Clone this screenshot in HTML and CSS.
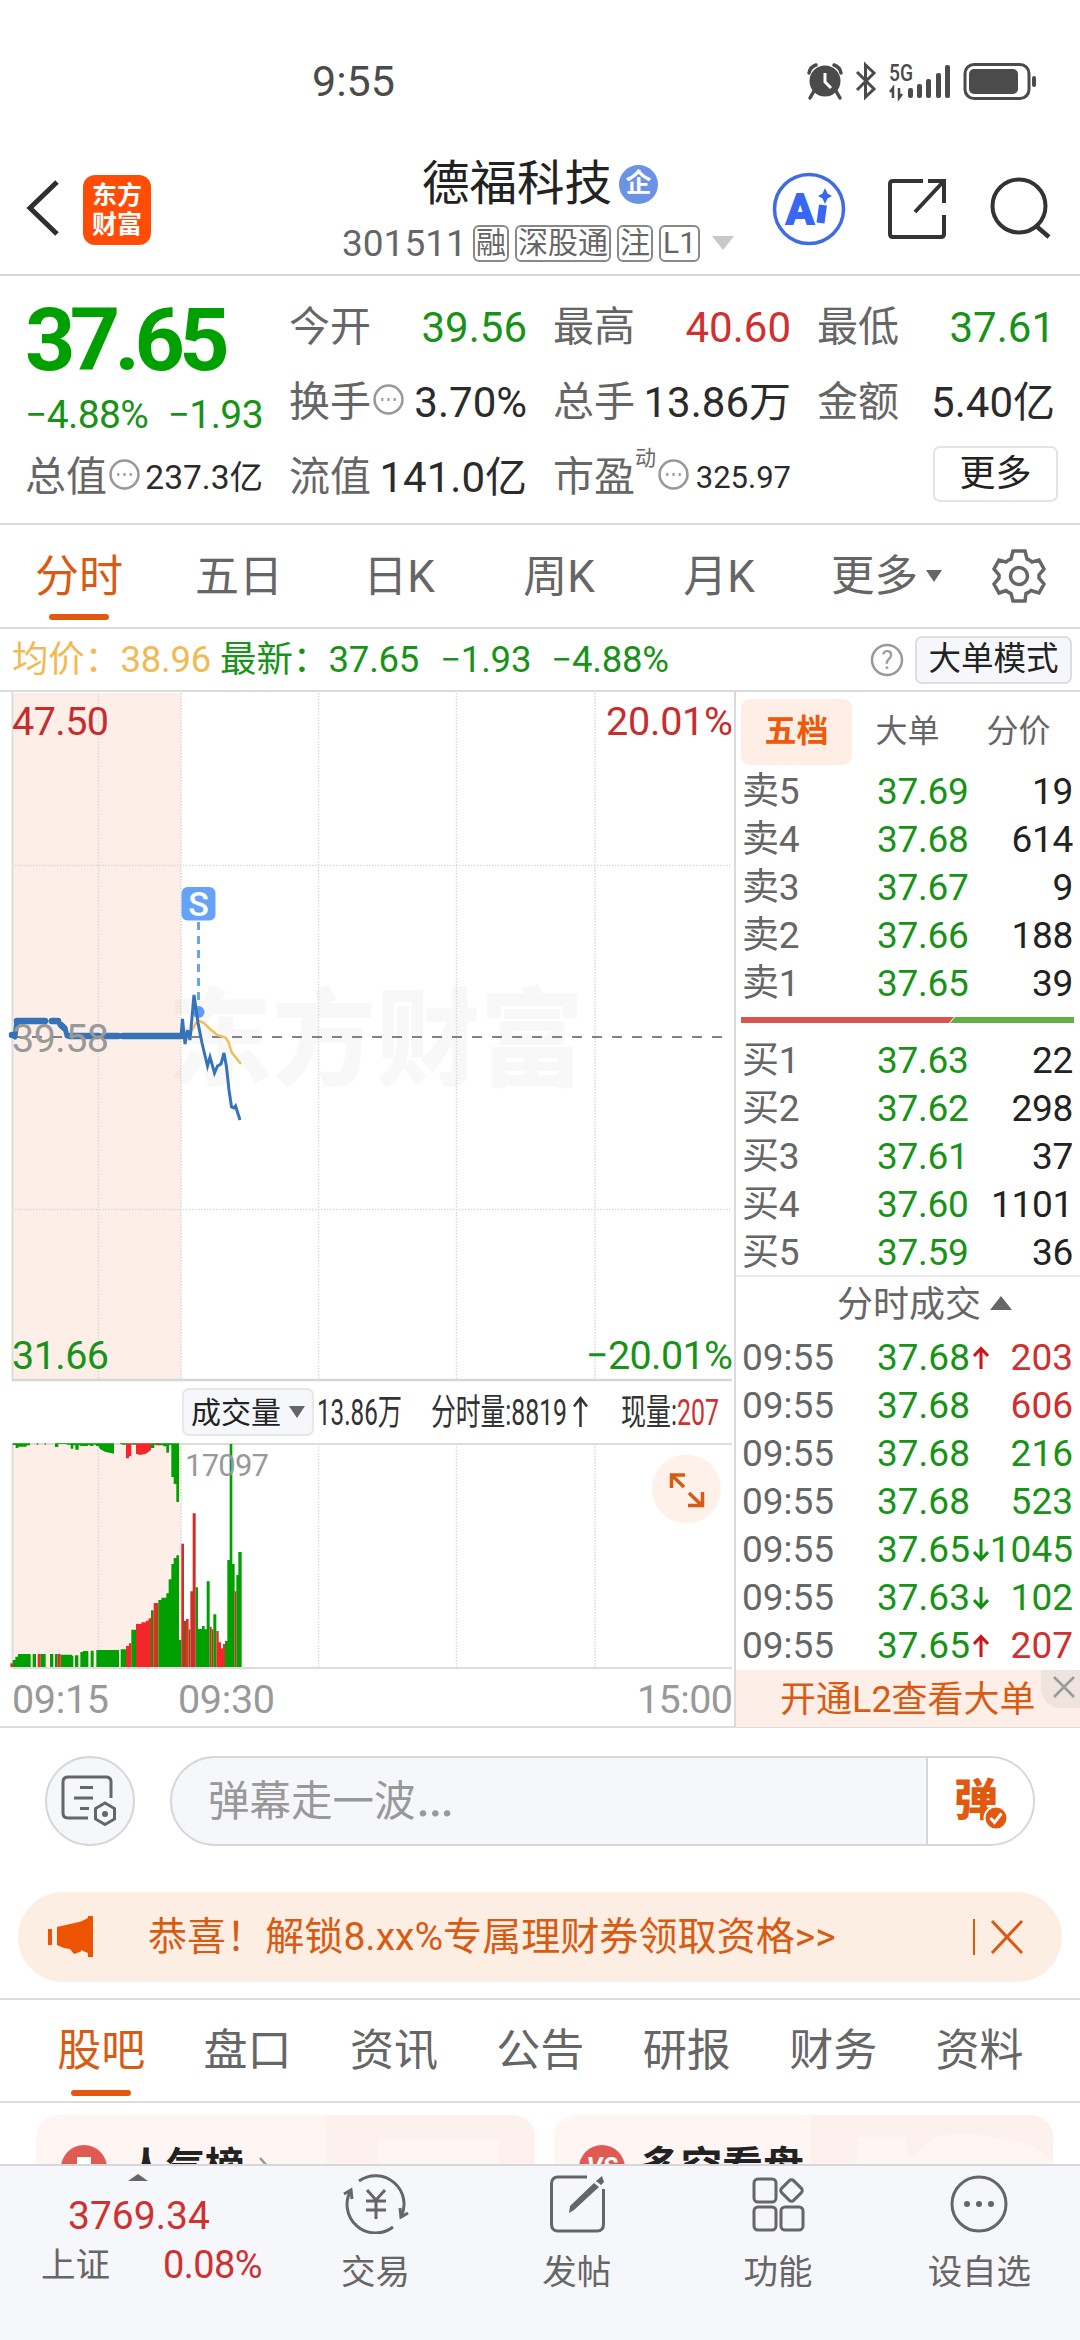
FILE: index.html
```html
<!DOCTYPE html>
<html lang="zh-CN">
<head>
<meta charset="utf-8">
<title>德福科技 301511</title>
<link rel="stylesheet" href="styles.css">
</head>
<body>
<div class="statusbar">
  <span class="clock">9:55</span>
  <svg class="status-icons" width="240" height="50" viewBox="800 56 240 50">
    <g fill="#4b4b4b" stroke="none">
      <circle cx="825" cy="81" r="15.5"/>
      <path d="M814 91l-4 7M836 91l4 7M809 73q1-6 7-8M841 73q-1-6-7-8" fill="none" stroke="#4b4b4b" stroke-width="3.500" stroke-linecap="round"/>
      <path d="M825 73v9l6 6" fill="none" stroke="#fff" stroke-width="3"/>
      <path d="M857 72l17 17-8.500 8V65l8.500 8-17 17" fill="none" stroke="#4b4b4b" stroke-width="3"/>
      <path d="M893 98v-10l-3 4M899 88v10l3-4" fill="none" stroke="#4b4b4b" stroke-width="2.500"/>
      <rect x="908" y="88" width="5" height="10" rx="2"/><rect x="917" y="84" width="5" height="14" rx="2"/><rect x="926" y="79" width="5" height="19" rx="2"/><rect x="936" y="73" width="5" height="25" rx="2"/><rect x="945" y="65" width="5" height="33" rx="2"/>
      <rect x="965" y="64.500" width="64" height="34" rx="9" fill="none" stroke="#4b4b4b" stroke-width="3"/>
      <rect x="969" y="69" width="49" height="25" rx="5"/><rect x="1032" y="76" width="4" height="11" rx="2"/>
    </g>
    <text x="889" y="81" class="net" textLength="24" lengthAdjust="spacingAndGlyphs">5G</text>
  </svg>
</div>

<header class="header">
  <svg class="back" width="34" height="60" viewBox="0 0 34 60"><path d="M31 4L4 30l27 26" fill="none" stroke="#2f2f2f" stroke-width="5"/></svg>
  <div class="logo"><span>东方</span><span>财富</span></div>
  <div class="title-block">
    <div class="title">德福科技<span class="ent">企</span></div>
    <div class="sub"><span class="code">301511</span><span class="tag">融</span><span class="tag">深股通</span><span class="tag">注</span><span class="tag l1">L1</span><i class="tri-down light"></i></div>
  </div>
  <div class="head-icons">
    <svg width="74" height="76" viewBox="0 0 74 76"><circle cx="37" cy="38" r="34.500" fill="#fff" stroke="#3f6ce0" stroke-width="3.500"/><text x="14" y="53" class="ai" textLength="28" lengthAdjust="spacingAndGlyphs">A</text><path d="M51 34l-2.500 18" stroke="#3867f6" stroke-width="8"/><path d="M53 17l2.500 5.500 4.500 2.500-4.500 2.500-2.500 5.500-2.500-5.500-4.500-2.500 4.500-2.500z" fill="#3867f6"/></svg>
    <svg width="62" height="64" viewBox="0 0 62 64"><path d="M36 4H6Q3 4 3 7V57Q3 60 6 60H54Q57 60 57 57V38M41 4H57V26M56 5L28 35" fill="none" stroke="#333" stroke-width="4"/></svg>
    <svg width="64" height="64" viewBox="0 0 64 64"><circle cx="29" cy="29" r="26.500" fill="none" stroke="#333" stroke-width="4"/><path d="M45 48L59 60" stroke="#333" stroke-width="4.500"/></svg>
  </div>
</header>

<section class="quote">
  <div class="price-col">
    <div class="last">37.65</div>
    <div class="chg"><span>−4.88%</span><span>−1.93</span></div>
    <div class="kv small"><b>总值</b><svg class="dots" viewBox="0 0 30 30"><circle cx="15" cy="15" r="13.500"/><path d="M8 15h2M14 15h2M20 15h2"/></svg><em>237.3亿</em></div>
  </div>
  <div class="grid">
    <div class="kv"><b>今开</b><em class="g">39.56</em></div>
    <div class="kv"><b>最高</b><em class="r">40.60</em></div>
    <div class="kv"><b>最低</b><em class="g">37.61</em></div>
    <div class="kv"><b>换手</b><svg class="dots" viewBox="0 0 30 30"><circle cx="15" cy="15" r="13.500"/><path d="M8 15h2M14 15h2M20 15h2"/></svg><em>3.70%</em></div>
    <div class="kv"><b>总手</b><em>13.86万</em></div>
    <div class="kv"><b>金额</b><em>5.40亿</em></div>
    <div class="kv"><b>流值</b><em>141.0亿</em></div>
    <div class="kv small pe"><b>市盈</b><sup>动</sup><svg class="dots" viewBox="0 0 30 30"><circle cx="15" cy="15" r="13.500"/><path d="M8 15h2M14 15h2M20 15h2"/></svg><em>325.97</em></div>
    <div class="more-cell"><span class="more-btn">更多</span></div>
  </div>
</section>

<nav class="ktabs">
  <span class="on">分时</span><span>五日</span><span>日K</span><span>周K</span><span>月K</span>
  <span class="more">更多<i class="tri-down"></i></span>
  <svg class="gear" width="54" height="54" viewBox="-27 -27 54 54"><path d="M-6-25H6L8-17Q11-16 13-14L20-16L25-7L20-1V2L25 8L20 17L12 14.500Q10 16.500 7 17.500L6 25H-6L-8 17.500Q-11 16.500-13 14.500L-20 17L-25 8L-20 2V-1L-25-7L-20-16L-13-14Q-11-16-8-17Z" fill="none" stroke="#666" stroke-width="3.500"/><circle r="8.500" fill="none" stroke="#666" stroke-width="3.500"/></svg>
</nav>

<div class="info">
  <span class="avg">均价：</span><span class="avg n1">38.96</span><span class="g n2">最新：</span><span class="g n1">37.65</span><span class="g n3">−1.93</span><span class="g n4">−4.88%</span>
  <svg class="help" width="34" height="34" viewBox="0 0 34 34"><circle cx="17" cy="17" r="15" fill="none" stroke="#999" stroke-width="2.500"/><text x="17" y="25.500" text-anchor="middle" class="qm">?</text></svg>
  <span class="mode">大单模式</span>
</div>

<main class="board">
  <div class="charts">
    <svg class="price-chart" width="734" height="690" viewBox="0 692 734 690">
      <rect x="12" y="693" width="169" height="687" fill="#fdeee7"/>
      <text x="168" y="1077" class="wm" textLength="416" lengthAdjust="spacingAndGlyphs">东方财富</text>
      <path d="M12 865.500H732M12 1209.500H732M98.500 693V1380M181 693V1380M318.500 693V1380M456.500 693V1380M595 693V1380" stroke="#d9d9d9" stroke-width="1.500" stroke-dasharray="1.500 1.500" fill="none"/>
      <path d="M12.500 692V1380" stroke="#ddd" stroke-width="2"/>
      <path d="M12 1380H732" stroke="#d6d6d6" stroke-width="2.500"/>
      <path d="M12 1037H732" stroke="#828282" stroke-width="2" stroke-dasharray="10 10"/>
      <path d="M191 1032L196 1023L199 1021L204 1023L210 1029L217 1035L225.500 1037.500L228.500 1042L231.500 1052L237 1059L241 1064" fill="none" stroke="#f2be58" stroke-width="2.500"/>
      <path d="M12 1035L15 1037L17 1021H45M51 1021H57L61 1025L65 1028L67 1036H181" fill="none" stroke="#3573b9" stroke-width="5" stroke-linecap="round" stroke-linejoin="round"/>
      <path d="M17 1021H45M52 1021H58M61 1025L64 1028M12 1035h.1M70 1036H98M105 1036H118M123 1036H181" fill="none" stroke="#3573b9" stroke-width="6.500" stroke-linecap="round"/>
      <circle cx="198.500" cy="1012" r="6" fill="#5c9cf3"/>
      <path d="M181 1036L182.500 1019L185 1044L187.500 1030L190 1040L194 995L198 1023L202 1043L207.500 1066L210 1057L214.500 1073L217.500 1066L221 1064L224 1053L226.500 1067L229 1090L231.500 1107L234 1108L235.500 1106L240 1120" fill="none" stroke="#3573b9" stroke-width="3"/>
      <path d="M198.500 922V1008" stroke="#68a4f3" stroke-width="3" stroke-dasharray="8 6"/>
      <rect x="181.500" y="887" width="34" height="33.500" rx="6" fill="#66a3f8"/>
      <text x="198.500" y="916" text-anchor="middle" class="s">S</text>
      <g class="num">
        <text x="12" y="735" fill="#c62d2d" textLength="97">47.50</text>
        <text x="733" y="735" fill="#c62d2d" text-anchor="end" textLength="127">20.01%</text>
        <text x="12" y="1052" fill="#999" textLength="97">39.58</text>
        <text x="12" y="1369" fill="#189318" textLength="97">31.66</text>
        <text x="733" y="1369" fill="#189318" text-anchor="end" textLength="147">−20.01%</text>
      </g>
    </svg>
    <div class="vol-head">
      <span class="vol-btn">成交量<i class="tri-down"></i></span>
      <svg width="420" height="60" viewBox="314 1382 420 60">
        <g class="cond">
          <text x="317" y="1425" textLength="85" lengthAdjust="spacingAndGlyphs">13.86万</text>
          <text x="431" y="1425" textLength="136" lengthAdjust="spacingAndGlyphs">分时量:8819</text>
          <text x="621" y="1425" textLength="98" lengthAdjust="spacingAndGlyphs">现量:<tspan fill="#d03030">207</tspan></text>
          <path d="M580.500 1427V1398M574 1406.500L580.500 1398L587 1406.500" fill="none" stroke="#333" stroke-width="2.500"/>
        </g>
      </svg>
    </div>
    <svg class="vol-chart" width="734" height="285" viewBox="0 1443 734 285">
      <rect x="12" y="1444" width="169" height="224" fill="#fdeee7"/>
      <path d="M98.500 1444V1668M181 1444V1668M318.500 1444V1668M456.500 1444V1668M595 1444V1668" stroke="#d9d9d9" stroke-width="1.500" stroke-dasharray="1.500 1.500"/>
      <path d="M12 1444H732M12 1668H732" stroke="#ddd" stroke-width="2"/>
      <path d="M12.500 1444V1668" stroke="#ddd" stroke-width="2"/>
      <g transform="translate(0 1430) scale(.33333)">
        <path fill="#00a000" d="M38 711V690H46V680H54V672H92V711ZM98 672h10V711H98ZM121 672h16V711H121ZM150 672h10V711H150ZM165 672h8V711H165ZM182 674h34v3h4V711H182ZM225 676h10V711H225ZM241 711V666h8v-3h16V711ZM272 662h9V711H272ZM289 660H357V711H289ZM362 658H378V711H362ZM394 599h14V711H394ZM453 541h8V711H453ZM475 711V510H484V503H499V490H506V448H514V402H521V384H529V376H537V630H544V711ZM587 711V472H594V597H606V588H614V598H620V454H629V711ZM640 553h9V711H640ZM675 711V633H682V390H689V42H697V402H704V711ZM709 711V435H715V366H725V711Z"/>
        <path fill="#f3262a" d="M31 700h8V711H31ZM113 672h8V711H113ZM173 672h9V711H173ZM378 711V648H387V640H394V711ZM408 711V582H424V577H438V572H446V565H453V711ZM461 519H475V711H461ZM558 567h8V711H558ZM649 711V603H656V637H663V655H669V642H675V711Z"/>
        <path fill="#cf2f2b" d="M544 711V341H552V711ZM571 711V484H578V250H587V711ZM629 590h6V711H629ZM704 484H709V711H704Z"/>
        <path fill="#7a5a12" d="M552 572h6V711H552ZM566 598h5V711H566ZM635 598h5V711H635ZM455 545h4V711H455ZM470 525h4V711H470Z"/>
        <path fill="#00a000" d="M38 40H90V46H80V50H55V54H47V45H38ZM110 40h5v4h-5ZM134 40h4v4h-4ZM152 40H165V51H175V42H200V44H212V56H220V46H226V59H236V46H241V48H264V45H270V48H280V44H288V48H295L301 58L315 65L342 71V40ZM360 40H378V44H365V42H360ZM453 40H537V216H529V162H521V141H514V45H507V68H499V49H490V46H475V44H463V54H453ZM394 40H408V44H394Z"/>
        <path fill="#f3262a" d="M378 40V85H387V79H394V40ZM408 40V71L420 75L438 71L446 65L453 60V40ZM467 40h10v6h-10Z"/>
      </g>
      <text x="185" y="1476" class="vmax" textLength="84">17097</text>
      <circle cx="686.500" cy="1489" r="34.500" fill="#fef1ea"/>
      <path d="M671.500 1488V1475H685M672 1475.500L684 1487M689 1493L702 1505.500M702.500 1492V1505.500H688" fill="none" stroke="#d85b13" stroke-width="3.500"/>
      <g class="num" fill="#999">
        <text x="12" y="1713" textLength="97">09:15</text>
        <text x="178" y="1713" textLength="97">09:30</text>
        <text x="733" y="1713" text-anchor="end" textLength="96">15:00</text>
      </g>
    </svg>
  </div>

  <aside class="depth">
    <div class="dtabs"><span class="on">五档</span><span>大单</span><span>分价</span></div>
    <div class="rows">
      <div class="row"><b>卖5</b><i>37.69</i><em>19</em></div>
      <div class="row"><b>卖4</b><i>37.68</i><em>614</em></div>
      <div class="row"><b>卖3</b><i>37.67</i><em>9</em></div>
      <div class="row"><b>卖2</b><i>37.66</i><em>188</em></div>
      <div class="row"><b>卖1</b><i>37.65</i><em>39</em></div>
    </div>
    <svg class="ratio" width="333" height="6" viewBox="0 0 333 6"><path d="M0 0H213L208 6H0Z" fill="#d9534f"/><path d="M214 0H333V6H209Z" fill="#60b044"/></svg>
    <div class="rows buy">
      <div class="row"><b>买1</b><i>37.63</i><em>22</em></div>
      <div class="row"><b>买2</b><i>37.62</i><em>298</em></div>
      <div class="row"><b>买3</b><i>37.61</i><em>37</em></div>
      <div class="row"><b>买4</b><i>37.60</i><em>1101</em></div>
      <div class="row"><b>买5</b><i>37.59</i><em>36</em></div>
    </div>
    <div class="deals-head">分时成交<i class="tri-up"></i></div>
    <div class="rows deals">
      <div class="row"><b>09:55</b><i>37.68<svg class="arr r" viewBox="0 0 16 24"><path d="M8 23V3M1 10L8 2.500L15 10"/></svg></i><em class="r">203</em></div>
      <div class="row"><b>09:55</b><i>37.68</i><em class="r">606</em></div>
      <div class="row"><b>09:55</b><i>37.68</i><em class="g">216</em></div>
      <div class="row"><b>09:55</b><i>37.68</i><em class="g">523</em></div>
      <div class="row"><b>09:55</b><i>37.65<svg class="arr g" viewBox="0 0 16 24"><path d="M8 1V21M1 14L8 21.500L15 14"/></svg></i><em class="g">1045</em></div>
      <div class="row"><b>09:55</b><i>37.63<svg class="arr g" viewBox="0 0 16 24"><path d="M8 1V21M1 14L8 21.500L15 14"/></svg></i><em class="g">102</em></div>
      <div class="row"><b>09:55</b><i>37.65<svg class="arr r" viewBox="0 0 16 24"><path d="M8 23V3M1 10L8 2.500L15 10"/></svg></i><em class="r">207</em></div>
    </div>
    <div class="l2">开通L2查看大单<span class="x"><svg width="24" height="24" viewBox="0 0 24 24"><path d="M2 2L22 22M22 2L2 22" stroke="#999" stroke-width="2.500"/></svg></span></div>
  </aside>
</main>

<div class="danmu">
  <span class="round"><svg width="60" height="56" viewBox="0 0 60 56"><g fill="none" stroke="#666" stroke-width="3"><path d="M51 25V9Q51 4 46 4H8Q3 4 3 9V40Q3 45 8 45H28M20 14.500H33M14 25H33M20 35.500H29"/><path d="M45 30L54.500 35.500V46L45 51.500L35.500 46V35.500Z"/></g><circle cx="45" cy="41" r="3" fill="#666"/></svg></span>
  <div class="dm-input"><span>弹幕走一波<span class="ell">…</span></span><span class="dm-toggle">弹<svg width="26" height="26" viewBox="0 0 26 26"><circle cx="13" cy="13" r="11.500" fill="#e2580f" stroke="#fff" stroke-width="2"/><path d="M7.500 13l4 4.500 7-9" fill="none" stroke="#fff" stroke-width="3"/></svg></span></div>
</div>

<div class="notice">
  <svg class="horn" width="48" height="42" viewBox="0 0 48 42"><path d="M10 11L34 5.500L41 2V0H46V41H41V37L34 34V35.500L27 38L23 33L17 32L10 29Z" fill="#ec5302"/><rect x="1" y="13" width="4" height="16" fill="#ec5302"/></svg>
  <span class="msg">恭喜！解锁8.xx%专属理财券领取资格&gt;&gt;</span>
  <i class="bar"></i>
  <svg class="close" width="34" height="34" viewBox="0 0 34 34"><path d="M2 1L32 33M32 1L2 33" stroke="#d85b13" stroke-width="3"/></svg>
</div>

<nav class="ctabs"><span class="on">股吧</span><span>盘口</span><span>资讯</span><span>公告</span><span>研报</span><span>财务</span><span>资料</span></nav>

<div class="cards">
  <div class="card"><svg class="deco" width="209" height="49" viewBox="0 0 209 49"><path d="M0 0H209V49H173V24H52V49H-44V31H0Z" fill="#fdf1ee"/></svg>
    <svg class="ic" width="46" height="46" viewBox="0 0 46 46"><circle cx="23" cy="23" r="23" fill="#e05a54"/><path d="M16 12h14v24H16z" fill="#fff"/></svg><span>人气榜</span><svg class="chev" width="12" height="22" viewBox="0 0 12 22"><path d="M1 1l9 10-9 10" fill="none" stroke="#999" stroke-width="2.500"/></svg></div>
  <div class="card"><svg class="deco" width="242" height="49" viewBox="0 0 242 49"><path d="M0 0H242V49H0Z" fill="#fdf1ee"/><path d="M46 22H94L99 43L121 24Q150 14 188 24Q230 28 242 49H46Z" fill="#fff6f3"/></svg>
    <svg class="ic" width="46" height="46" viewBox="0 0 46 46"><circle cx="23" cy="23" r="23" fill="#e05a54"/><text x="23" y="30" text-anchor="middle" class="vs">VS</text></svg><span>多空看盘</span></div>
</div>

<footer class="tabbar">
  <div class="index"><i class="tri-up"></i><div class="pt">3769.34</div><div class="ln"><span>上证</span><em>0.08%</em></div></div>
  <div class="item"><svg width="66" height="60" viewBox="-33 -30 66 60"><g fill="none" stroke="#666" stroke-width="3"><path d="M-17-23A28.500 28.500 0 0 1 25 13M17 23A28.500 28.500 0 0 1-25-14"/><path d="M-32-10L-25-14L-24-5M24 4L25 13L32 9"/><path d="M-9-14L0-4L9-14M0-4V15M-10-3H10M-10 6H10"/></g></svg>交易</div>
  <div class="item"><svg width="66" height="60" viewBox="-33 -30 66 60"><path d="M10-27H-19Q-25.500-27-25.500-20V20Q-25.500 27-19 27H20Q26.500 27 26.500 20V-15" fill="none" stroke="#666" stroke-width="3"/><path d="M-8 9L-7 2L17-21L22-17L-3 6ZM19-23L25-28L27-22L24-19Z" fill="#666"/></svg>发帖</div>
  <div class="item"><svg width="66" height="60" viewBox="-33 -30 66 60"><g fill="none" stroke="#666" stroke-width="3"><rect x="-24" y="-25" width="22" height="23" rx="4"/><rect x="-24" y="3" width="22" height="23" rx="4"/><rect x="3" y="3" width="22" height="23" rx="4"/><rect x="5" y="-22" width="17" height="17" rx="3" transform="rotate(45 13.500 -13.500)"/></g></svg>功能</div>
  <div class="item"><svg width="66" height="60" viewBox="-33 -30 66 60"><circle r="27" fill="none" stroke="#666" stroke-width="3"/><g fill="#666"><circle cx="-12" r="3"/><circle r="3"/><circle cx="12" r="3"/></g></svg>设自选</div>
</footer>
</body>
</html>
```
FILE: styles.css
```css
* { box-sizing: border-box; }
body {
  margin: 0; width: 1080px; height: 2340px; overflow: hidden;
  display: flex; flex-direction: column; background: #fff; color: #222;
  font-family: Roboto, "Noto Sans CJK SC", sans-serif; font-size: 37px;
}
body > * { flex: none; }
b, i, em { font-weight: 400; font-style: normal; }
svg { display: block; flex: none; }
span, b, em { white-space: nowrap; }
.g { color: #189318; }
.r { color: #d03030; }
.tri-down, .tri-up { display: inline-block; width: 0; height: 0; border: 8px solid transparent; }
.tri-down { border-top: 12px solid #666; border-bottom: 0; }
.tri-up { border-bottom: 12px solid #666; border-top: 0; }
.tri-down.light { border-width: 14px 11px 0; border-top-color: #c8c8c8; }

/* status bar */
.statusbar { height: 120px; padding: 56px 40px 0 312px; display: flex; justify-content: space-between; }
.clock { font-size: 43px; line-height: 51px; color: #4b4b4b; }
.net { font: 500 23px Roboto, sans-serif; fill: #4b4b4b; }

/* header */
.header { height: 156px; border-bottom: 2px solid #d8d8d8; display: flex; padding: 0 26px; }
.back { margin-top: 58px; }
.logo { width: 68px; height: 70px; margin: 55px 0 0 23px; border-radius: 12px; background: #ff4d08; color: #fff;
  display: flex; flex-direction: column; align-items: center; justify-content: center; font-size: 25px; line-height: 29px; font-weight: 700; }
.title-block { width: 400px; margin-left: 191px; padding-top: 32px; }
.title { display: flex; align-items: center; gap: 7px; padding-left: 80px; font-size: 47.5px; line-height: 64px; height: 64px; }
.ent { width: 39px; height: 39px; border-radius: 50%; background: #6a93e6; color: #fff; font-size: 26px; line-height: 37px; text-align: center; font-weight: 700; }
.sub { display: flex; align-items: center; height: 54px; gap: 6px; color: #666; }
.code { font-size: 37px; width: 125px; }
.tag { height: 37px; border: 2px solid #888; border-radius: 6px; font-size: 30px; line-height: 32px; padding: 0 1px; }
.l1 { padding: 0 2px; }
.sub .tri-down { margin-left: 6px; }
.head-icons { display: flex; gap: 41px; align-items: center; height: 149px; margin-left: auto; padding-top: 28px; }
.ai { font: 700 42px Roboto, sans-serif; fill: #3867f6; stroke: #3867f6; stroke-width: 2; }

/* quote summary */
.quote { height: 249px; padding: 14px 25px 0; display: flex; gap: 26px; border-bottom: 2px solid #dcdcdc; }
.price-col { width: 238px; display: flex; flex-direction: column; }
.last { font-size: 88px; font-weight: 700; line-height: 99px; letter-spacing: -5.7px; height: 101px; color: #00a000; }
.chg { display: flex; justify-content: space-between; color: #189318; font-size: 39px; line-height: 48px; height: 49px; letter-spacing: -.6px; }
.grid { display: grid; grid-template-columns: repeat(3, 238px); grid-auto-rows: 75px; column-gap: 26px; }
.kv { display: flex; align-items: center; height: 75px; line-height: 75px; font-size: 42px; }
.kv b { color: #666; font-size: 41px; }
.kv em { margin-left: auto; color: #2b2b2b; }
.kv em.g { color: #189318; }
.kv em.r { color: #d03030; }
.kv.small em { font-size: 33.5px; }
.kv.pe em { font-size: 31px; }
.kv sup { font-size: 21px; line-height: 24px; color: #666; height: 64px; }
.dots { width: 31px; height: 31px; margin-left: 2px; margin-bottom: 6px; fill: none; stroke: #999; stroke-width: 2.5; }
.dots path { stroke-width: 3; }
.more-cell { display: flex; justify-content: flex-end; padding-top: 6px; }
.more-btn { width: 125px; height: 56px; border: 2px solid #e4e4e6; border-radius: 7px; font-size: 36px; line-height: 52px; text-align: center; margin-right: -3px; }

/* chart period tabs */
.ktabs { height: 104px; display: flex; border-bottom: 2px solid #dcdcdc; color: #666; font-size: 44px; line-height: 105px; }
.ktabs > span { width: 160px; text-align: center; position: relative; left: -1px; }
.ktabs .on, .ctabs .on { color: #d85b13; }
.ktabs .on::after, .ctabs .on::after { content: ""; position: absolute; left: 50px; bottom: 7px; width: 60px; height: 6px; border-radius: 3px; background: #e2580f; }
.ktabs .more { width: 152px; padding-left: 32px; text-align: left; display: flex; align-items: center; gap: 8px; font-size: 43.5px; }
.gear { margin: 24px 0 0 40px; }

.info { height: 63px; padding: 0 8px 0 12px; border-bottom: 2px solid #dcdcdc; display: flex; align-items: center; font-size: 36.5px; line-height: 64px; letter-spacing: -.2px; }
.avg { color: #f0bb55; }
.n1 { margin-left: -.5px; }
.n2 { margin-left: 9px; }
.n3 { margin-left: 21px; }
.n4 { margin-left: 20px; }
.help { margin-left: auto; margin-right: 11px; }
.qm { font: 25px Roboto, sans-serif; fill: #999; }
.mode { width: 157px; height: 48px; border: 2px solid #dcdee2; border-radius: 7px; background: #f6f7fa; font-size: 32.5px; line-height: 43px; text-align: center; letter-spacing: 0; }

/* charts */
.board { height: 1036px; display: flex; border-bottom: 2px solid #dcdcdc; }
.charts { width: 734px; }
.wm { font: 900 106px "Noto Sans CJK SC", sans-serif; fill: #000; fill-opacity: .027; }
.num { font-size: 39.5px; }
.s { font-size: 34px; font-weight: 500; fill: #fff; }
.vol-head { height: 61px; display: flex; padding-left: 182px; }
.vol-btn { width: 132px; height: 48px; margin-top: 6px; border: 2px solid #e6e8ec; border-radius: 7px; background: #f6f7fa; font-size: 30px; line-height: 43px; padding-left: 7px; display: flex; align-items: center; gap: 8px; }
.cond { font-size: 36px; fill: #333; }
.vmax { font-size: 31px; fill: #999; }

/* order book */
.depth { width: 346px; border-left: 2px solid #d8dadd; }
.dtabs { display: grid; grid-template-columns: 111px 111px 111px; height: 76px; padding: 7px 0 0 5px; color: #666; font-size: 32px; line-height: 65px; text-align: center; }
.dtabs .on { height: 66px; border-radius: 9px; background: #feeee6; color: #ee5a0c; font-weight: 700; }
.row { display: grid; grid-template-columns: 135px 110px 1fr; height: 48px; line-height: 48px; padding: 0 7px 0 6px; font-size: 37px; }
.row b { color: #666; }
.row i { color: #189318; display: flex; align-items: center; }
.rows:not(.deals) { letter-spacing: -.3px; }
.row em { text-align: right; justify-self: end; }
.arr { width: 16px; height: 24px; margin-left: 3px; fill: none; stroke: #109010; stroke-width: 3; }
.arr.r { stroke: #cf1515; }
.ratio { margin: 9px 0 0 5px; }
.buy { margin-top: 14px; height: 240px; border-bottom: 2px solid #e9e9ec; }
.deals-head { height: 57px; line-height: 57px; padding-left: 101px; font-size: 36px; color: #666; display: flex; align-items: center; gap: 9px; }
.deals-head .tri-up { border-width: 0 11px 14px; margin-bottom: 5px; }
.l2 { height: 57px; background: #fdeee7; color: #d85b13; font-size: 36px; line-height: 60px; padding-left: 44px; position: relative; }
.x { position: absolute; right: 0; top: 0; width: 39px; height: 38px; border-bottom-left-radius: 20px; background: #eee3df; padding: 5px 0 0 11px; }

/* comment bar and notice */
.danmu { height: 164px; padding: 28px 45px 0; display: flex; gap: 35px; }
.round { width: 90px; height: 90px; border: 2px solid #d5d7da; border-radius: 50%; background: #f6f7fa; display: flex; align-items: center; justify-content: center; }
.dm-input { width: 865px; height: 90px; border: 2px solid #d5d7da; border-radius: 45px; background: #f6f7fa; display: flex; justify-content: space-between; overflow: hidden; font-size: 41.5px; line-height: 88px; padding-left: 36px; color: #999; }
.ell { font-size: 58px; line-height: 0; }
.dm-toggle { width: 107px; background: #fff; border-left: 2px solid #d5d7da; color: #e2580f; font-weight: 900; font-size: 44px; padding-left: 26px; position: relative; line-height: 86px; }
.dm-toggle svg { position: absolute; left: 55px; top: 47px; }

.notice { width: 1044px; height: 90px; margin: 0 18px; border-radius: 45px; background: #fdeee4; display: flex; align-items: center; padding: 0 38px 0 29px; color: #d85b13; }
.msg { font-size: 39.1px; margin-left: 53px; line-height: 86px; }
.bar { width: 2px; height: 36px; background: #d85b13; margin-left: auto; margin-right: 15px; }

.ctabs { height: 105px; margin-top: 16px; padding-left: 28px; border-top: 2px solid #dcdcdc; border-bottom: 2px solid #dcdcdc; display: grid; grid-template-columns: repeat(7, 146.4px); text-align: center; font-size: 44px; line-height: 103px; color: #666; }
.ctabs span { position: relative; }
.ctabs .on::after { left: 43px; bottom: 7px; }

.cards { height: 61px; padding: 12px 28px 0 36px; display: flex; gap: 19px; overflow: hidden; }
.card { width: 499px; height: 160px; flex: none; border-radius: 22px; background: #fff6f3; position: relative; overflow: hidden; display: flex; align-items: flex-start; padding: 30px 0 0 25px; font-size: 39px; font-weight: 700; line-height: 44px; color: #222; }
.card span { margin-left: 20px; position: relative; }
.card + .card span { margin-left: 15px; font-size: 41px; }
.deco { position: absolute; right: 0; top: 0; }
.ic, .chev { position: relative; }
.chev { margin: 12px 0 0 15px; }
.vs { font: italic 700 25px Roboto, sans-serif; fill: #fff; }

/* bottom bar */
.tabbar { height: 176px; background: #f6f7fa; border-top: 2px solid #d5d7da; display: flex; color: #666; font-size: 34.5px; }
.index { width: 275px; padding-top: 8px; display: flex; flex-direction: column; align-items: flex-start; }
.index .tri-up { border-width: 0 10px 7px; margin-left: 128px; }
.pt { color: #d03030; font-size: 39px; line-height: 50px; margin: 10px 0 0 68px; }
.ln { display: flex; width: 221px; justify-content: space-between; line-height: 50px; margin: -1px 0 0 41px; }
.ln em { color: #d03030; font-size: 38px; letter-spacing: -.6px; }
.item { width: 201.3px; display: flex; flex-direction: column; align-items: center; padding-top: 8px; line-height: 50px; gap: 13px; }
```
